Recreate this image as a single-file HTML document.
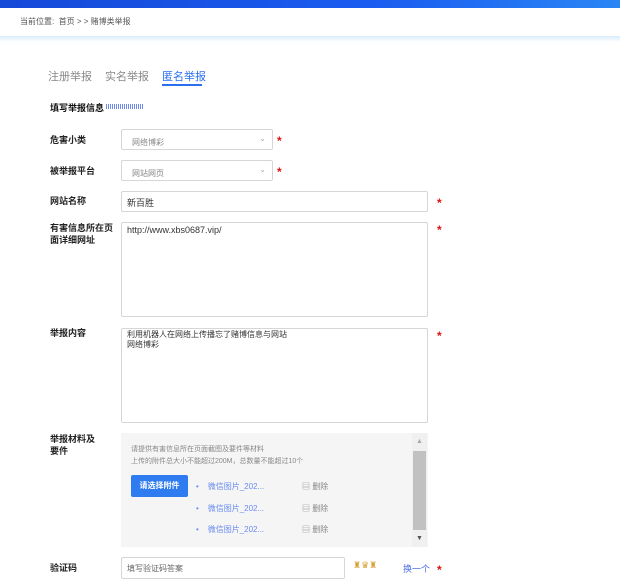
<!DOCTYPE html>
<html><head><meta charset="utf-8"><style>
*{margin:0;padding:0;box-sizing:border-box}
body{width:620px;height:571px;overflow:hidden;background:#fff;font-family:"Liberation Sans","Noto Sans CJK SC",sans-serif;position:relative;color:#333}
.a{position:absolute;white-space:nowrap}
.top{left:0;top:0;width:620px;height:8px;background:linear-gradient(90deg,#1549d8,#1a5cf0 60%,#2a86f5)}
.shadow{left:0;top:36px;width:620px;height:6px;background:linear-gradient(#d8ecfb,#fff)}
.lbl{font-size:9px;font-weight:bold;color:#222;left:50px;line-height:12px}
.box{border:1px solid #d6d6d6;border-radius:2px;background:#fff}
.sel{font-size:8px;color:#888;padding:7px 0 0 10px}
.star{color:#e01010;font-size:12px;font-weight:bold}
.in{font-size:9px;color:#333;padding:4px 0 0 5px}
</style></head><body>
<div class="a top"></div>
<div class="a shadow"></div>
<div class="a" style="left:20px;top:16px;font-size:8px;color:#555">当前位置:&nbsp; 首页 &gt; &gt; 赌博类举报</div>
<div class="a" style="left:48px;top:68px;font-size:11px;color:#888">注册举报</div>
<div class="a" style="left:105px;top:68px;font-size:11px;color:#888">实名举报</div>
<div class="a" style="left:162px;top:68px;font-size:11px;color:#2a6ff0">匿名举报</div>
<div class="a" style="left:162px;top:84px;width:40px;height:1.5px;background:#2a6ff0"></div>
<div class="a" style="left:50px;top:101px;font-size:9px;font-weight:bold;color:#111">填写举报信息</div>
<div class="a" style="left:106px;top:104px;width:37px;height:5px;background:repeating-linear-gradient(90deg,#4a6de8 0 1px,transparent 1px 2px);opacity:.8"></div>

<div class="a lbl" style="top:134px">危害小类</div>
<div class="a box sel" style="left:121px;top:129px;width:152px;height:21px">网络博彩<span style="position:absolute;right:6px;top:4px;color:#aaa">⌄</span></div>
<div class="a star" style="left:277px;top:134px">*</div>

<div class="a lbl" style="top:165px">被举报平台</div>
<div class="a box sel" style="left:121px;top:160px;width:152px;height:21px">网站网页<span style="position:absolute;right:6px;top:4px;color:#aaa">⌄</span></div>
<div class="a star" style="left:277px;top:165px">*</div>

<div class="a lbl" style="top:195px">网站名称</div>
<div class="a box in" style="left:121px;top:191px;width:307px;height:21px">新百胜</div>
<div class="a star" style="left:437px;top:196px">*</div>

<div class="a lbl" style="top:222px">有害信息所在页<br>面详细网址</div>
<div class="a box in" style="left:121px;top:222px;width:307px;height:95px;padding-top:2px">http://www.xbs0687.vip/</div>
<div class="a star" style="left:437px;top:223px">*</div>

<div class="a lbl" style="top:327px">举报内容</div>
<div class="a box in" style="left:121px;top:328px;width:307px;height:95px;padding-top:1px;font-size:8px;line-height:10px">利用机器人在网络上传播忘了赌博信息与网站<br>网络博彩</div>
<div class="a star" style="left:437px;top:329px">*</div>

<div class="a lbl" style="top:433px">举报材料及<br>要件</div>
<div class="a" style="left:121px;top:433px;width:307px;height:114px;background:#f5f5f5"></div>
<div class="a" style="left:412px;top:433px;width:15px;height:114px;background:#f0f0f0"></div>
<div class="a" style="left:413px;top:451px;width:13px;height:79px;background:#c1c1c1"></div>
<div class="a" style="left:416px;top:438px;font-size:7px;color:#aaa">▲</div>
<div class="a" style="left:416px;top:535px;font-size:7px;color:#555">▼</div>
<div class="a" style="left:131px;top:444px;font-size:7px;color:#888;line-height:12px">请提供有害信息所在页面截图及要件等材料<br>上传的附件总大小不能超过200M，总数量不能超过10个</div>
<div class="a" style="left:131px;top:475px;width:57px;height:22px;background:#2f7bf0;border-radius:2px;color:#fff;font-size:8px;font-weight:bold;text-align:center;line-height:22px">请选择附件</div>
<div class="a" style="left:196px;top:476px;font-size:8px;color:#6a8cf0;line-height:21.5px">•&nbsp;&nbsp;&nbsp;&nbsp;微信图片_202...<br>•&nbsp;&nbsp;&nbsp;&nbsp;微信图片_202...<br>•&nbsp;&nbsp;&nbsp;&nbsp;微信图片_202...</div>
<div class="a" style="left:302px;top:476px;font-size:8px;color:#888;line-height:21.5px">▤ 删除<br>▤ 删除<br>▤ 删除</div>

<div class="a lbl" style="top:562px">验证码</div>
<div class="a box" style="left:121px;top:557px;width:224px;height:22px;font-size:8px;color:#666;padding:5px 0 0 5px">填写验证码答案</div>
<div class="a" style="left:353px;top:560px;font-size:9px;color:#d8a030">♜♛♜</div>
<div class="a" style="left:403px;top:562px;font-size:9px;color:#4a6de8">换一个</div>
<div class="a star" style="left:437px;top:563px">*</div>
</body></html>
